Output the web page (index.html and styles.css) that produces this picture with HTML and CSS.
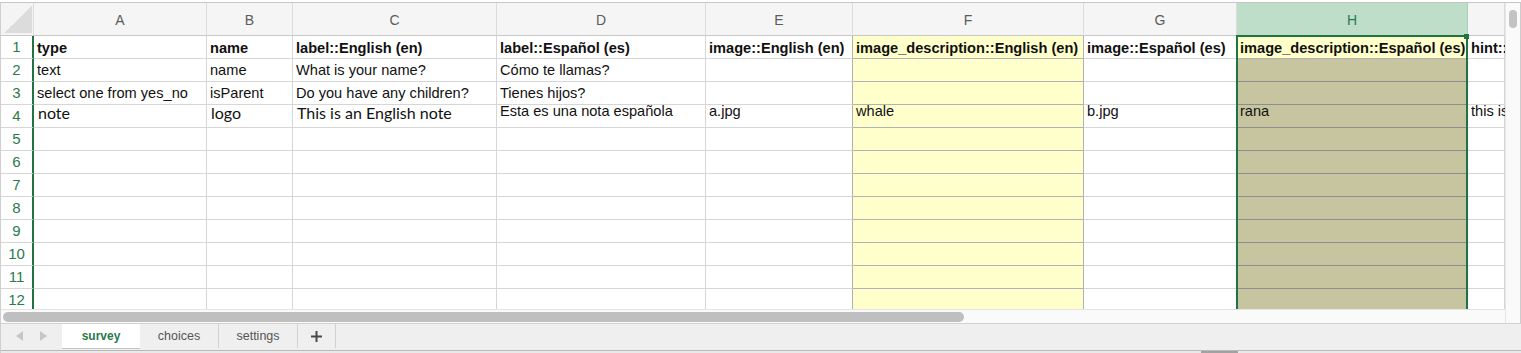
FILE: index.html
```html
<!DOCTYPE html>
<html lang="en">
<head>
<meta charset="UTF-8">
<meta name="viewport" content="width=device-width, initial-scale=1.0">
<title>survey.xlsx</title>
<link rel="stylesheet" href="styles.css">
</head>
<body>
<div class="window">
    <div class="main">
        <div class="pane">
            <!-- Sheet grid -->
            <div class="sheet">
                <div class="corner"></div>
                <div class="colhdr">A</div>
                <div class="colhdr">B</div>
                <div class="colhdr">C</div>
                <div class="colhdr">D</div>
                <div class="colhdr">E</div>
                <div class="colhdr">F</div>
                <div class="colhdr">G</div>
                <div class="colhdr sel">H</div>
                <div class="colhdr"></div>

                <div class="rowhdr">1</div>
                <div class="cell b">type</div>
                <div class="cell b">name</div>
                <div class="cell b">label::English (en)</div>
                <div class="cell b">label::Español (es)</div>
                <div class="cell b">image::English (en)</div>
                <div class="cell b yel">image_description::English (en)</div>
                <div class="cell b">image::Español (es)</div>
                <div class="cell b yel">image_description::Español (es)</div>
                <div class="cell b">hint::English (en)</div>

                <div class="rowhdr">2</div>
                <div class="cell">text</div>
                <div class="cell">name</div>
                <div class="cell">What is your name?</div>
                <div class="cell">Cómo te llamas?</div>
                <div class="cell"></div>
                <div class="cell yel"></div>
                <div class="cell"></div>
                <div class="cell tint"></div>
                <div class="cell"></div>

                <div class="rowhdr">3</div>
                <div class="cell">select one from yes_no</div>
                <div class="cell">isParent</div>
                <div class="cell">Do you have any children?</div>
                <div class="cell">Tienes hijos?</div>
                <div class="cell"></div>
                <div class="cell yel"></div>
                <div class="cell"></div>
                <div class="cell tint"></div>
                <div class="cell"></div>

                <div class="rowhdr">4</div>
                <div class="cell cal">note</div>
                <div class="cell cal">logo</div>
                <div class="cell cal">This is an English note</div>
                <div class="cell top">Esta es una nota española</div>
                <div class="cell top">a.jpg</div>
                <div class="cell top yel">whale</div>
                <div class="cell top">b.jpg</div>
                <div class="cell top tint">rana</div>
                <div class="cell top">this is a hint</div>

                <div class="rowhdr">5</div>
                <div class="cell"></div><div class="cell"></div><div class="cell"></div><div class="cell"></div><div class="cell"></div>
                <div class="cell yel"></div><div class="cell"></div><div class="cell tint"></div><div class="cell"></div>
                <div class="rowhdr">6</div>
                <div class="cell"></div><div class="cell"></div><div class="cell"></div><div class="cell"></div><div class="cell"></div>
                <div class="cell yel"></div><div class="cell"></div><div class="cell tint"></div><div class="cell"></div>
                <div class="rowhdr">7</div>
                <div class="cell"></div><div class="cell"></div><div class="cell"></div><div class="cell"></div><div class="cell"></div>
                <div class="cell yel"></div><div class="cell"></div><div class="cell tint"></div><div class="cell"></div>
                <div class="rowhdr">8</div>
                <div class="cell"></div><div class="cell"></div><div class="cell"></div><div class="cell"></div><div class="cell"></div>
                <div class="cell yel"></div><div class="cell"></div><div class="cell tint"></div><div class="cell"></div>
                <div class="rowhdr">9</div>
                <div class="cell"></div><div class="cell"></div><div class="cell"></div><div class="cell"></div><div class="cell"></div>
                <div class="cell yel"></div><div class="cell"></div><div class="cell tint"></div><div class="cell"></div>
                <div class="rowhdr">10</div>
                <div class="cell"></div><div class="cell"></div><div class="cell"></div><div class="cell"></div><div class="cell"></div>
                <div class="cell yel"></div><div class="cell"></div><div class="cell tint"></div><div class="cell"></div>
                <div class="rowhdr">11</div>
                <div class="cell"></div><div class="cell"></div><div class="cell"></div><div class="cell"></div><div class="cell"></div>
                <div class="cell yel"></div><div class="cell"></div><div class="cell tint"></div><div class="cell"></div>
                <div class="rowhdr">12</div>
                <div class="cell"></div><div class="cell"></div><div class="cell"></div><div class="cell"></div><div class="cell"></div>
                <div class="cell yel"></div><div class="cell"></div><div class="cell tint"></div><div class="cell"></div>

                <!-- selected column H -->
                <div class="selection"><span class="handle"></span></div>
            </div>
            <div class="hscroll"><div class="hthumb"></div></div>
        </div>
        <div class="vscroll"><div class="vthumb"></div></div>
    </div>

    <!-- Sheet tabs -->
    <div class="tabs">
        <div class="nav">
            <svg width="8" height="10" viewBox="0 0 8 10"><polygon points="7,0 7,10 0,5" fill="#c6c6c6"/></svg>
            <svg width="8" height="10" viewBox="0 0 8 10"><polygon points="1,0 1,10 8,5" fill="#c6c6c6"/></svg>
        </div>
        <div class="tab active">survey</div>
        <div class="tab">choices</div>
        <div class="tab">settings</div>
        <div class="tab add">
            <svg width="11" height="11" viewBox="0 0 11 11"><path d="M5.5 0v11M0 5.5h11" stroke="#4a4a4a" stroke-width="2"/></svg>
        </div>
    </div>
    <div class="dock"><span></span></div>
</div>
</body>
</html>
```

FILE: styles.css
```css
body {
    margin: 0;
    font-family: "Liberation Sans", Arial, sans-serif;
    background-color: white;
}
.window {
    width: 1520px;
    margin-top: 2px;
    border-top: 1px solid #c6c6c6;
    border-left: 1px solid #cfcfcf;
}
.main {
    display: flex;
}
.pane {
    width: 1504px;
}

/* grid */
.sheet {
    display: grid;
    grid-template-columns: 33px 173px 86px 204px 209px 147px 231px 153px 231px 37px;
    grid-template-rows: 33px;
    grid-auto-rows: 23px;
    height: 306px;
    overflow: hidden;
    position: relative;
}
.corner {
    background: #f4f4f4 linear-gradient(to bottom right, transparent 50%, #dcdcdc 50%) no-repeat right 1px bottom 2px / 28px 28px;
    border-right: 1px solid #dcdcdc;
    border-bottom: 1px solid #c8c8c8;
}
.colhdr {
    box-sizing: border-box;
    background-color: #f5f5f5;
    border-right: 1px solid #dcdcdc;
    border-bottom: 1px solid #c8c8c8;
    color: #5c5c5c;
    font-size: 14px;
    line-height: 32px;
    padding-top: 1px;
    text-align: center;
}
.colhdr.sel {
    background-color: #bfdeca;
    color: #2b7a4c;
    border-right-color: #a9cdb5;
}
.rowhdr {
    box-sizing: border-box;
    border-right: 2px solid #217346;
    border-bottom: 1px solid #d6d6d6;
    color: #2b7a4c;
    font-size: 15px;
    line-height: 22px;
    text-align: center;
}
.cell {
    box-sizing: border-box;
    border-right: 1px solid #d6d6d6;
    border-bottom: 1px solid #d6d6d6;
    padding: 0 2px 0 3px;
    font-size: 14.6px;
    line-height: 22px;
    color: #111;
    white-space: nowrap;
}
.cell.b {
    font-weight: bold;
    padding-top: 2px;
    line-height: 20px;
}
.cell.cal {
    font-family: Lato, "Open Sans", sans-serif;
    font-size: 16px;
    line-height: 16px;
    padding-left: 4px;
}
.cell.top {
    line-height: 13px;
}
/* column E borders on the yellow column */
.sheet > .cell:nth-child(10n+6) {
    border-right-color: #b2b2b2;
}
.yel {
    background-color: #ffffcc;
    border-right-color: #b2b2b2;
    border-bottom-color: #b2b2b2;
}
.tint {
    background-color: #c7c59f;
    border-bottom-color: #8d8d8d;
}
.selection {
    position: absolute;
    left: 1235px;
    top: 32px;
    width: 232px;
    bottom: -4px;
    border: 2px solid #217346;
    box-sizing: border-box;
}
.handle {
    position: absolute;
    right: -3px;
    top: -3px;
    width: 5px;
    height: 5px;
    background-color: #217346;
}

/* scrollbars */
.hscroll {
    box-sizing: border-box;
    height: 14px;
    border-top: 1px solid #e4e4e4;
    background-color: #fafafa;
    padding: 2px 0 0 2px;
}
.hthumb {
    width: 961px;
    height: 10px;
    border-radius: 5px;
    background-color: #bfbfbf;
}
.vscroll {
    box-sizing: border-box;
    width: 16px;
    height: 320px;
    background-color: #fafafa;
    border-left: 1px solid #e6e6e6;
    border-right: 1px solid #cdcdcd;
    padding: 7px 0 0 3px;
}
.vthumb {
    width: 8px;
    height: 18px;
    border-radius: 4px;
    background-color: #c3c3c3;
}

/* tabs */
.tabs {
    box-sizing: border-box;
    height: 28px;
    display: flex;
    background-color: #efefef;
    border-top: 1px solid #d2d2d2;
    border-bottom: 1px solid #b9b9b9;
    padding-bottom: 2px;
}
.nav {
    width: 61px;
    display: flex;
    align-items: center;
    gap: 15px;
    padding-left: 15px;
    box-sizing: border-box;
}
.tab {
    width: 79px;
    box-sizing: border-box;
    border-right: 1px solid #d2d2d2;
    text-align: center;
    font-size: 12.5px;
    line-height: 25px;
    color: #555;
}
.tab.active {
    width: 78px;
    background-color: white;
    color: #2b7a4c;
    font-weight: bold;
    font-size: 12px;
    box-shadow: 0 1px 0 #c4c4c4;
    border-right: none;
}
.tab.add {
    width: 38px;
    display: flex;
    align-items: center;
    justify-content: center;
}
.dock {
    height: 2px;
    background-color: #e9e9e9;
}
.dock span {
    display: block;
    margin-left: 1200px;
    width: 37px;
    height: 2px;
    background-color: #a2a2a2;
}
```
